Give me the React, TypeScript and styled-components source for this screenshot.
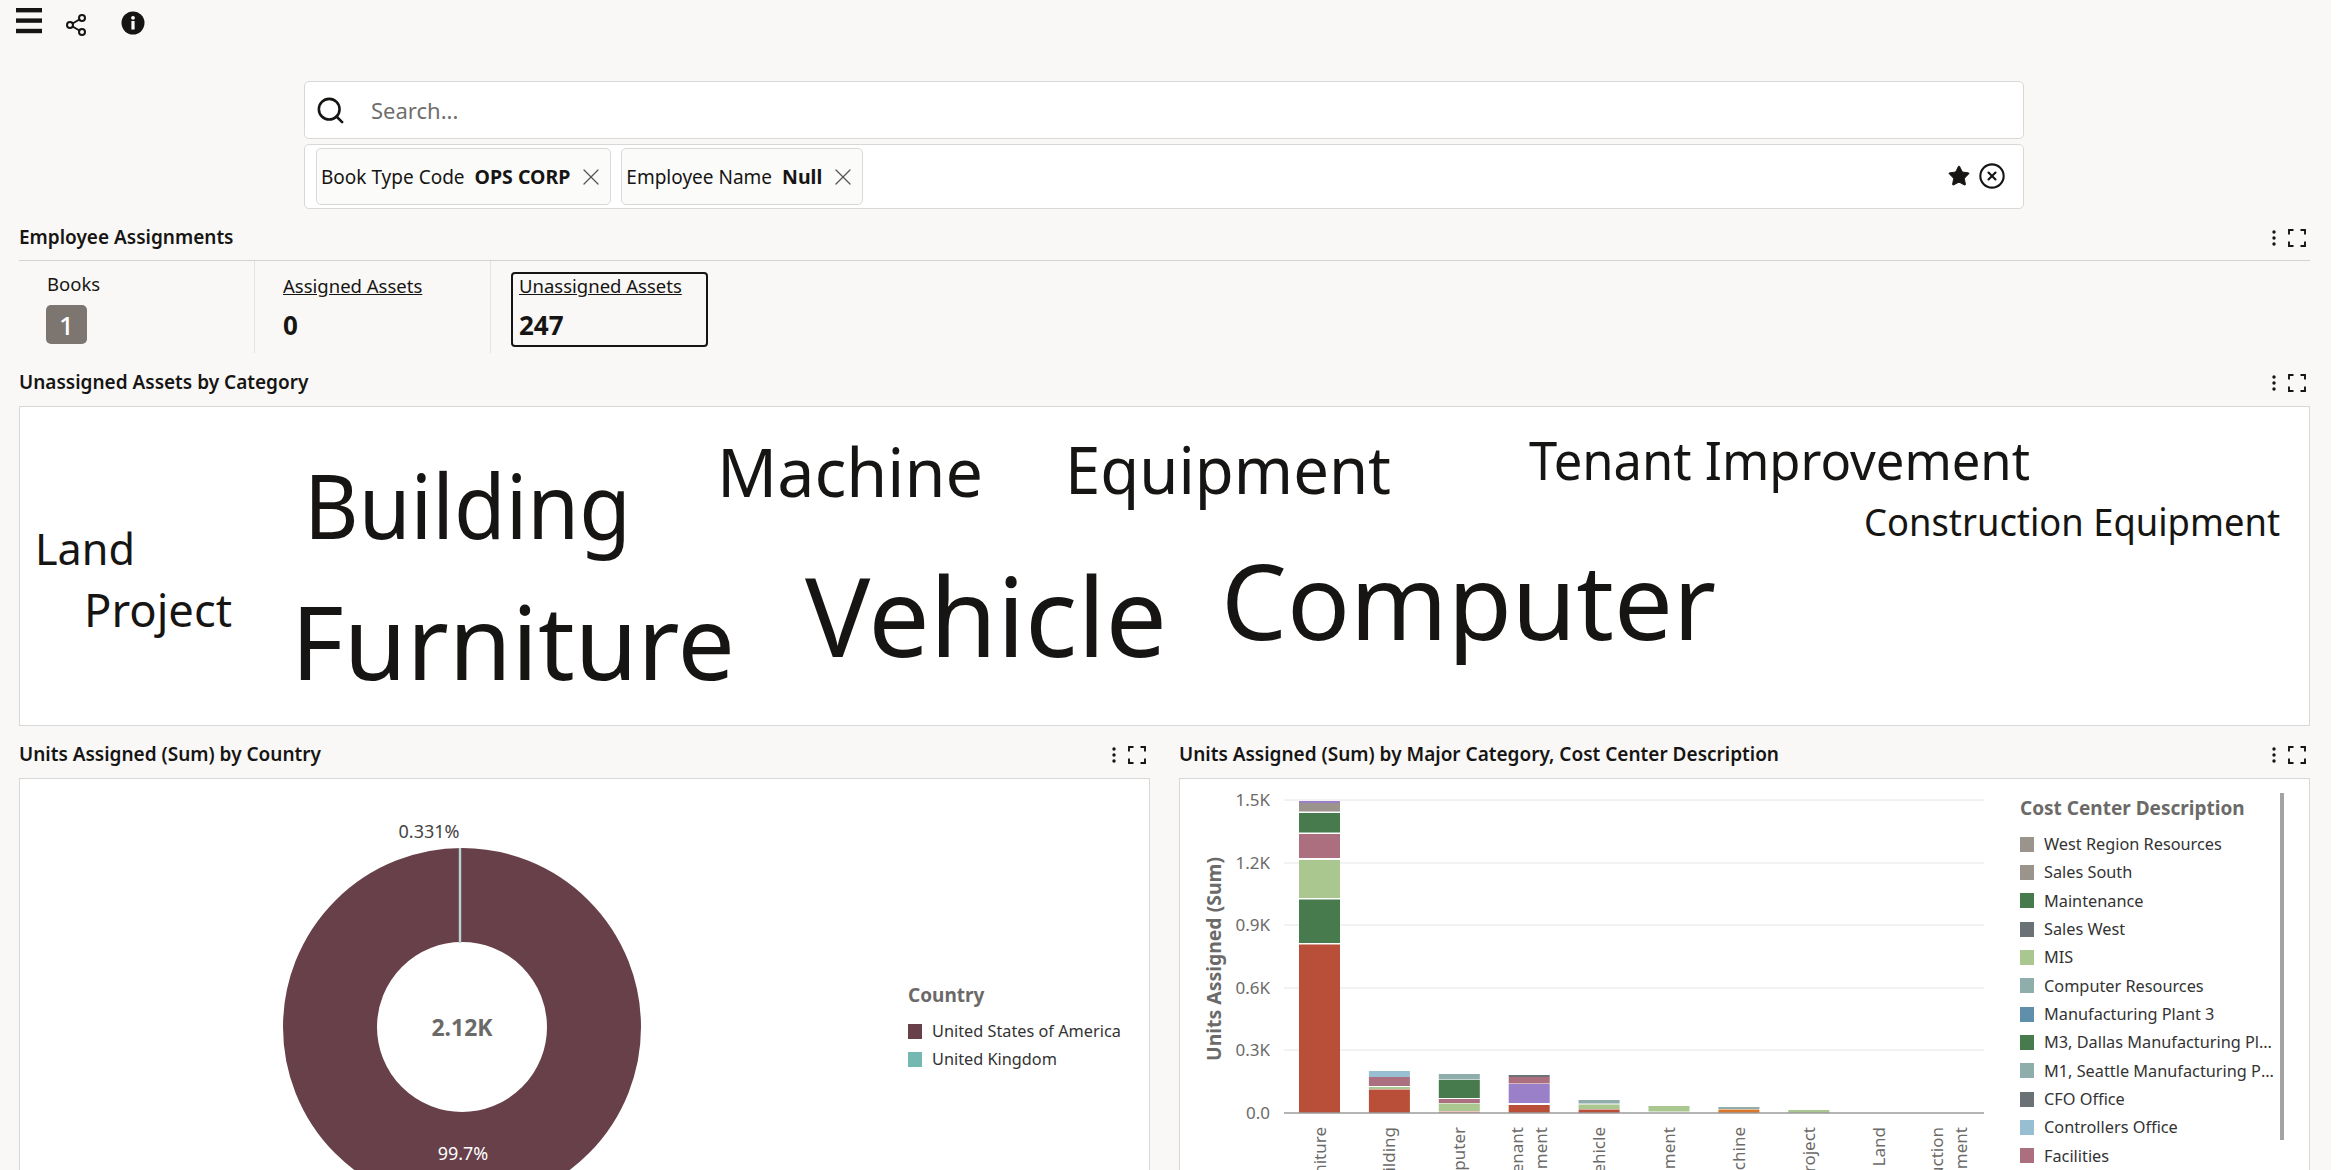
import styled, { createGlobalStyle } from 'styled-components';
import { CircleX, Search, Share2, Star, X } from 'lucide-react';

const FONT = `'Noto Sans', 'Open Sans', sans-serif`;
const INK = '#161513';
const MUTED = '#6b6a68';

const GlobalStyle = createGlobalStyle`
  html, body {
    margin: 0;
    padding: 0;
    height: 1170px;
    overflow: hidden;
    background: #ffffff;
  }
  * { box-sizing: border-box; }
`;

const words = [
  { text: 'Land', x: 35, y: 565, size: 44, width: 100 },
  { text: 'Project', x: 84, y: 627, size: 45, width: 148 },
  { text: 'Building', x: 304, y: 539, size: 90, width: 327 },
  { text: 'Furniture', x: 291, y: 680, size: 102, width: 444 },
  { text: 'Machine', x: 717, y: 497, size: 68, width: 266 },
  { text: 'Equipment', x: 1065, y: 494, size: 66, width: 326 },
  { text: 'Vehicle', x: 805, y: 657, size: 110, width: 362 },
  { text: 'Computer', x: 1221, y: 640, size: 104, width: 495 },
  { text: 'Tenant Improvement', x: 1529, y: 480, size: 52, width: 501 },
  { text: 'Construction Equipment', x: 1864, y: 536, size: 38, width: 416 },
];

const RED = '#b94f39';
const GREEN = '#477a4c';
const LIME = '#a9c78f';
const PINK = '#ab6f80';
const TEAL = '#8fadab';
const SKY = '#98bfd1';
const PURPLE = '#9a7fc9';
const STONE = '#9a948d';
const SLATE = '#6b7275';
const ORANGE = '#d9782d';

// top and bottom of each segment, in page pixels
const bars = [
  {
    label: ['Furniture'],
    parts: [
      [801, 803, PURPLE],
      [803, 811.5, STONE],
      [813, 832.5, GREEN],
      [834, 858, PINK],
      [860, 898, LIME],
      [899.5, 943, GREEN],
      [944.5, 1113, RED],
    ],
  },
  {
    label: ['Building'],
    parts: [
      [1071, 1077, SKY],
      [1077, 1086, PINK],
      [1087, 1089, LIME],
      [1089.5, 1113, RED],
    ],
  },
  {
    label: ['Computer'],
    parts: [
      [1074, 1079.5, TEAL],
      [1080, 1098, GREEN],
      [1099, 1103, PINK],
      [1103.5, 1111, LIME],
      [1111.5, 1113, '#d88f8a'],
    ],
  },
  {
    label: ['Tenant', 'Improvement'],
    parts: [
      [1075, 1077, SLATE],
      [1077, 1083.5, PINK],
      [1084, 1103, PURPLE],
      [1105, 1113, RED],
    ],
  },
  {
    label: ['Vehicle'],
    parts: [
      [1100, 1103.5, TEAL],
      [1104.5, 1109, LIME],
      [1109.5, 1113, RED],
    ],
  },
  { label: ['Equipment'], parts: [[1106, 1111.5, LIME]] },
  {
    label: ['Machine'],
    parts: [
      [1107, 1109, TEAL],
      [1109.5, 1113, ORANGE],
    ],
  },
  { label: ['Project'], parts: [[1110, 1113, LIME]] },
  { label: ['Land'], parts: [] },
  { label: ['Construction', 'Equipment'], parts: [] },
] as { label: string[]; parts: [number, number, string][] }[];

const ticks = [
  { label: '1.5K', y: 800 },
  { label: '1.2K', y: 863 },
  { label: '0.9K', y: 925 },
  { label: '0.6K', y: 988 },
  { label: '0.3K', y: 1050 },
];

const costCenters = [
  { name: 'West Region Resources', color: STONE },
  { name: 'Sales South', color: STONE },
  { name: 'Maintenance', color: GREEN },
  { name: 'Sales West', color: SLATE },
  { name: 'MIS', color: LIME },
  { name: 'Computer Resources', color: TEAL },
  { name: 'Manufacturing Plant 3', color: '#5f8fab' },
  { name: 'M3, Dallas Manufacturing Plant 1', color: GREEN },
  { name: 'M1, Seattle Manufacturing Plant 2', color: TEAL },
  { name: 'CFO Office', color: SLATE },
  { name: 'Controllers Office', color: SKY },
  { name: 'Facilities', color: PINK },
];

const HeaderActions = () => (
  <Actions>
    <svg width="6" height="18" viewBox="0 0 6 18" fill={INK}>
      <circle cx="3" cy="3" r="1.7" />
      <circle cx="3" cy="9" r="1.7" />
      <circle cx="3" cy="15" r="1.7" />
    </svg>
    <svg width="18" height="18" viewBox="0 0 18 18" fill="none" stroke={INK} strokeWidth="1.9">
      <path d="M1 5.5V1h4.5M12.5 1H17v4.5M17 12.5V17h-4.5M5.5 17H1v-4.5" />
    </svg>
  </Actions>
);

const App = () => {
  return (
    <Page>
      <GlobalStyle />
      <Toolbar>
        <svg width="26" height="26" viewBox="0 0 26 26" fill={INK}>
          <rect x="0" y="0" width="26" height="4.4" />
          <rect x="0" y="10.4" width="26" height="4.4" />
          <rect x="0" y="20.8" width="26" height="4.4" />
        </svg>
        <ShareIcon size={24} strokeWidth={2} />
        <svg width="24" height="24" viewBox="0 0 24 24">
          <circle cx="12" cy="12" r="11.5" fill={INK} />
          <rect x="10.4" y="10" width="3.2" height="8.5" fill="#fff" />
          <circle cx="12" cy="6.8" r="1.9" fill="#fff" />
        </svg>
      </Toolbar>

      <SearchArea>
        <SearchBar>
          <Search size={31} strokeWidth={2} color={INK} />
          <SearchInput placeholder="Search..." readOnly />
        </SearchBar>
        <FilterBar>
          <Chip>
            <span>Book Type Code</span>
            <b>OPS CORP</b>
            <X size={28} strokeWidth={1.1} color="#555" />
          </Chip>
          <Chip>
            <span>Employee Name</span>
            <b>Null</b>
            <X size={28} strokeWidth={1.1} color="#555" />
          </Chip>
          <FilterTools>
            <Star size={24} fill={INK} color={INK} strokeWidth={1} />
            <CircleX size={28} strokeWidth={1.8} color={INK} />
          </FilterTools>
        </FilterBar>
      </SearchArea>

      <Section>
        <SectionHead $ruled>
          <Title>Employee Assignments</Title>
          <HeaderActions />
        </SectionHead>
        <KpiRow>
          <KpiCell>
            <KpiPlain>Books</KpiPlain>
            <Badge>1</Badge>
          </KpiCell>
          <KpiCell>
            <KpiLink>Assigned Assets</KpiLink>
            <KpiValue>0</KpiValue>
          </KpiCell>
          <KpiSelected>
            <SelectedLink>Unassigned Assets</SelectedLink>
            <KpiValue>247</KpiValue>
          </KpiSelected>
        </KpiRow>
      </Section>

      <Section>
        <SectionHead>
          <Title>Unassigned Assets by Category</Title>
          <HeaderActions />
        </SectionHead>
        <CloudPanel>
          <svg width="2289" height="318" viewBox="20 407 2289 318">
            {words.map((w) => (
              <CloudWord
                key={w.text}
                x={w.x}
                y={w.y}
                fontSize={w.size}
                textLength={w.width}
                lengthAdjust="spacingAndGlyphs"
              >
                {w.text}
              </CloudWord>
            ))}
          </svg>
        </CloudPanel>
      </Section>

      <Columns>
        <Section>
          <SectionHead>
            <Title>Units Assigned (Sum) by Country</Title>
            <HeaderActions />
          </SectionHead>
          <ChartPanel>
            <ChartSvg width="860" height="400" viewBox="20 779 860 400">
              <circle cx="462" cy="1027" r="132" fill="none" stroke="#67404a" strokeWidth="94" />
              <line x1="460" y1="848" x2="460" y2="943" stroke="#b9d5d3" strokeWidth="2.4" />
              <text x="429" y="838" textAnchor="middle" fontSize="18" fill="#444">0.331%</text>
              <text x="463" y="1160" textAnchor="middle" fontSize="18" fill="#fff">99.7%</text>
              <text x="462" y="1036" textAnchor="middle" fontSize="23" fontWeight="700" fill={MUTED}>2.12K</text>
            </ChartSvg>
            <CountryLegend>
              <LegendTitle>Country</LegendTitle>
              <LegendRow>
                <Swatch $color="#67404a" />
                <LegendName>United States of America</LegendName>
              </LegendRow>
              <LegendRow>
                <Swatch $color="#74b8b2" />
                <LegendName>United Kingdom</LegendName>
              </LegendRow>
            </CountryLegend>
          </ChartPanel>
        </Section>

        <Section>
          <SectionHead>
            <Title>Units Assigned (Sum) by Major Category, Cost Center Description</Title>
            <HeaderActions />
          </SectionHead>
          <ChartPanel>
            <ChartSvg width="830" height="400" viewBox="1181 779 830 400">
              <text
                transform="translate(1222 959) rotate(-90)"
                textAnchor="middle"
                fontSize="19.4"
                fontWeight="700"
                fill={MUTED}
              >
                Units Assigned (Sum)
              </text>
              {ticks.map((t) => (
                <g key={t.label}>
                  <line x1="1285" x2="1985" y1={t.y} y2={t.y} stroke="#e6e6e6" strokeWidth="1" />
                  <text x="1271" y={t.y + 6} textAnchor="end" fontSize="17" fill={MUTED}>
                    {t.label}
                  </text>
                </g>
              ))}
              <text x="1271" y="1119" textAnchor="end" fontSize="17" fill={MUTED}>0.0</text>
              {bars.map((bar, i) => {
                const left = 1300 + i * 69.9;
                return (
                  <g key={bar.label.join(' ')}>
                    {bar.parts.map(([top, bottom, color]) => (
                      <rect key={top} x={left} y={top} width="41" height={bottom - top} fill={color} />
                    ))}
                    {bar.label.map((line, n) => {
                      const cx = left + 20.5 + (n - (bar.label.length - 1) / 2) * 24;
                      return (
                        <text
                          key={line}
                          transform={`translate(${cx + 6} 1127) rotate(-90)`}
                          textAnchor="end"
                          fontSize="17"
                          fill={MUTED}
                        >
                          {line}
                        </text>
                      );
                    })}
                  </g>
                );
              })}
              <line x1="1285" x2="1985" y1="1113" y2="1113" stroke="#9b9b9b" strokeWidth="1.5" />
            </ChartSvg>
            <CostLegend>
              <LegendTitle>Cost Center Description</LegendTitle>
              {costCenters.map((c) => (
                <LegendRow key={c.name}>
                  <Swatch $color={c.color} />
                  <LegendName>{c.name}</LegendName>
                </LegendRow>
              ))}
            </CostLegend>
            <ScrollThumb />
          </ChartPanel>
        </Section>
      </Columns>
    </Page>
  );
};

const Page = styled.div`
  width: 2331px;
  height: 1170px;
  overflow: hidden;
  background: #f9f8f6;
  padding: 0 21px 0 19px;
  font-family: ${FONT};
  color: ${INK};
`;

const Toolbar = styled.div`
  display: flex;
  align-items: flex-start;
  height: 81px;
  margin-left: -3px;
  padding-top: 8px;

  > svg:nth-child(2) {
    margin: 5px 0 0 22px;
  }
  > svg:nth-child(3) {
    margin: 3px 0 0 33px;
  }
`;

const ShareIcon = styled(Share2)`
  color: ${INK};
`;

const SearchArea = styled.div`
  display: flex;
  flex-direction: column;
  gap: 5px;
  width: 1720px;
  margin-left: 285px;
`;

const SearchBar = styled.div`
  display: flex;
  align-items: center;
  gap: 25px;
  height: 58px;
  padding: 0 0 0 10px;
  background: #ffffff;
  border: 1px solid #d9d8d6;
  border-radius: 5px;
`;

const SearchInput = styled.input`
  flex: 1;
  border: none;
  outline: none;
  background: transparent;
  padding: 0;
  font-family: ${FONT};
  font-size: 22px;
  color: ${INK};

  &::placeholder {
    color: #6f6e6c;
    opacity: 1;
  }
`;

const FilterBar = styled.div`
  display: flex;
  align-items: center;
  gap: 10px;
  height: 65px;
  padding: 0 17px 0 11px;
  background: #ffffff;
  border: 1px solid #d9d8d6;
  border-radius: 5px;
`;

const Chip = styled.div`
  display: flex;
  align-items: center;
  gap: 10px;
  height: 57px;
  padding: 0 4px;
  background: #fbfbfa;
  border: 1px solid #d9d8d6;
  border-radius: 5px;
  font-size: 19px;
  white-space: nowrap;

  b {
    font-weight: 700;
    font-size: 19.5px;
  }
  svg {
    margin: 0 1px 0 -3px;
  }
`;

const FilterTools = styled.div`
  display: flex;
  align-items: center;
  gap: 7px;
  margin: -2px 0 0 auto;
`;

const Section = styled.section`
  min-width: 0;
`;

const SectionHead = styled.div<{ $ruled?: boolean }>`
  display: flex;
  align-items: center;
  justify-content: space-between;
  height: ${(p) => (p.$ruled ? '52px' : '48px')};
  padding: ${(p) => (p.$ruled ? '4px' : '0')} 4px 0 0;
  border-bottom: ${(p) => (p.$ruled ? '1px solid #d3d2d0' : 'none')};
`;

const Title = styled.h2`
  margin: 0;
  font-size: 19px;
  font-weight: 600;
  white-space: nowrap;
`;

const Actions = styled.div`
  display: flex;
  align-items: center;
  gap: 11px;
  margin-top: 2px;
`;

const KpiRow = styled.div`
  display: flex;
  align-items: flex-start;
  height: 97px;
`;

const KpiCell = styled.div`
  display: flex;
  flex-direction: column;
  align-items: flex-start;
  width: 236px;
  height: 92px;
  padding: 10px 0 0 28px;
  border-right: 1px solid #e4e3e1;
`;

const KpiPlain = styled.span`
  font-size: 18.5px;
  line-height: 26px;
  height: 34px;
`;

const KpiLink = styled.span`
  margin-top: 2px;
  font-size: 18.5px;
  line-height: 26px;
  height: 34px;
  text-decoration: underline;
  white-space: nowrap;
`;

const SelectedLink = styled(KpiLink)`
  margin-top: -1px;
`;

const KpiValue = styled.span`
  font-size: 26px;
  line-height: 36px;
  font-weight: 700;
`;

const Badge = styled.span`
  display: flex;
  align-items: center;
  justify-content: center;
  width: 41px;
  height: 39px;
  margin-left: -1px;
  border-radius: 5px;
  background: #7d7670;
  color: #ffffff;
  font-size: 26px;
  font-weight: 500;
`;

const KpiSelected = styled.div`
  display: flex;
  flex-direction: column;
  align-items: flex-start;
  width: 197px;
  height: 75px;
  margin: 11px 0 0 20px;
  padding: 0 0 0 6px;
  border: 2px solid ${INK};
  border-radius: 4px;
`;

const CloudPanel = styled.div`
  height: 320px;
  background: #ffffff;
  border: 1px solid #d9d8d6;
`;

const CloudWord = styled.text`
  font-family: ${FONT};
  fill: ${INK};
`;

const Columns = styled.div`
  display: grid;
  grid-template-columns: 1fr 1fr;
  gap: 29px;
  margin-top: 4px;
`;

const ChartPanel = styled.div`
  display: flex;
  align-items: flex-start;
  height: 400px;
  background: #ffffff;
  border: 1px solid #d9d8d6;
`;

const ChartSvg = styled.svg`
  flex-shrink: 0;
  font-family: ${FONT};
`;

const CountryLegend = styled.div`
  padding: 201px 0 0 28px;
`;

const CostLegend = styled.div`
  width: 267px;
  padding: 14px 0 0 10px;
`;

const LegendTitle = styled.div`
  height: 37px;
  font-size: 19px;
  line-height: 30px;
  font-weight: 700;
  color: ${MUTED};
`;

const LegendRow = styled.div`
  display: flex;
  align-items: center;
  gap: 10px;
  height: 28.33px;
  font-size: 16.3px;
`;

const Swatch = styled.span<{ $color: string }>`
  flex-shrink: 0;
  width: 14px;
  height: 15px;
  background: ${(p) => p.$color};
`;

const LegendName = styled.span`
  overflow: hidden;
  white-space: nowrap;
  text-overflow: ellipsis;
  color: #333;
`;

const ScrollThumb = styled.div`
  flex-shrink: 0;
  width: 4px;
  height: 347px;
  margin: 14px 0 0 3px;
  background: #a3a3a3;
`;

export default App;
